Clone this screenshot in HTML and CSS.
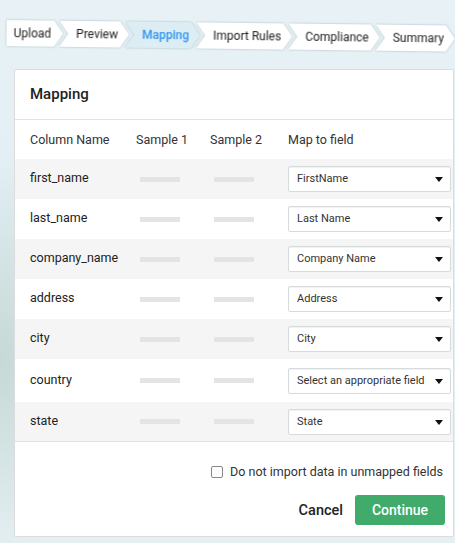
FILE: index.html
```html
<!DOCTYPE html>
<html>
<head>
<meta charset="utf-8">
<link rel="stylesheet" href="styles.css">
</head>
<body>
<nav class="steps">
  <div class="step first">Upload</div>
  <div class="step">Preview</div>
  <div class="step active">Mapping</div>
  <div class="step">Import Rules</div>
  <div class="step">Compliance</div>
  <div class="step">Summary</div>
</nav>
<section class="card">
  <header class="card-head">Mapping</header>
  <div class="grid head-row">
    <div>Column Name</div><div>Sample 1</div><div>Sample 2</div><div>Map to field</div>
  </div>
  <div class="grid row alt"><div>first_name</div><div><span class="bar"></span></div><div><span class="bar"></span></div><div class="sel">FirstName<i class="caret"></i></div></div>
  <div class="grid row"><div>last_name</div><div><span class="bar"></span></div><div><span class="bar"></span></div><div class="sel">Last Name<i class="caret"></i></div></div>
  <div class="grid row alt"><div>company_name</div><div><span class="bar"></span></div><div><span class="bar"></span></div><div class="sel">Company Name<i class="caret"></i></div></div>
  <div class="grid row"><div>address</div><div><span class="bar"></span></div><div><span class="bar"></span></div><div class="sel">Address<i class="caret"></i></div></div>
  <div class="grid row alt"><div>city</div><div><span class="bar"></span></div><div><span class="bar"></span></div><div class="sel">City<i class="caret"></i></div></div>
  <div class="grid row tall"><div>country</div><div><span class="bar"></span></div><div><span class="bar"></span></div><div class="sel">Select an appropriate field<i class="caret"></i></div></div>
  <div class="grid row alt last"><div>state</div><div><span class="bar"></span></div><div><span class="bar"></span></div><div class="sel">State<i class="caret"></i></div></div>
  <footer class="card-foot">
    <label class="check"><span class="box"></span>Do not import data in unmapped fields</label>
    <div class="actions">
      <span class="cancel">Cancel</span>
      <span class="continue">Continue</span>
    </div>
  </footer>
</section>
</body>
</html>
```
FILE: styles.css
```css
html, body { margin: 0; padding: 0; }
body {
  width: 455px;
  height: 543px;
  overflow: hidden;
  font-family: Roboto, "Liberation Sans", sans-serif;
  color: #222;
  background:
    radial-gradient(ellipse 120px 200px at 0px 360px, #c6d9d6 0%, rgba(198,217,214,0) 100%),
    linear-gradient(180deg, #e8f2f6 0%, #e1eef3 40%, #e6f0f3 100%);
}
.steps {
  display: flex;
  padding: 20px 0 0 7px;
  height: 26px;
  filter: drop-shadow(0 0 1px #9fb7bd);
  transform: rotate(0.7deg);
  transform-origin: 0 0;
}
.step {
  background: #fff;
  height: 26px;
  line-height: 26px;
  font-size: 12px;
  color: #222;
  padding: 0 11px 0 17px;
  margin-left: -4px;
  clip-path: polygon(0 0, calc(100% - 9px) 0, 100% 50%, calc(100% - 9px) 100%, 0 100%, 9px 50%);
  white-space: nowrap;
}
.step.first {
  margin-left: 0;
  padding-left: 7px;
  padding-right: 12px;
  clip-path: polygon(0 0, calc(100% - 9px) 0, 100% 50%, calc(100% - 9px) 100%, 0 100%);
}
.step.active {
  background: #dcedf4;
  color: #2f95ee;
  font-weight: 500;
}
.card {
  margin: 23px 1px 0 14px;
  background: #fff;
  border: 1px solid #dcdcdc;
  border-radius: 2px;
}
.card-head {
  height: 49px;
  line-height: 49px;
  padding-left: 15px;
  font-size: 15px;
  font-weight: 500;
  border-bottom: 1px solid #e2e2e2;
}
.grid {
  display: grid;
  grid-template-columns: 106px 74px 78px 1fr;
  align-items: center;
  padding-left: 15px;
  font-size: 12.5px;
}
.head-row { height: 39px; color: #333; }
.row { height: 40px; }
.row > div:first-child { padding-bottom: 3px; }
.row.tall { height: 43px; }
.row.last { height: 39px; }
.alt { background: #f5f5f5; }
.bar {
  display: block;
  width: 40px;
  height: 5px;
  margin-left: 4px;
  background: #e4e4e4;
}
.sel {
  position: relative;
  height: 24px;
  line-height: 24px;
  margin-right: 2px;
  border: 1px solid #d6dcdc;
  border-radius: 2px;
  background: #fff;
  box-shadow: inset 0 1px 1px rgba(0,0,0,0.06);
  padding-left: 8px;
  font-size: 11px;
  color: #333;
}
.caret {
  position: absolute;
  right: 7px;
  top: 10px;
  width: 0;
  height: 0;
  border-left: 4px solid transparent;
  border-right: 4px solid transparent;
  border-top: 5px solid #111;
}
.card-foot {
  border-top: 1px solid #e2e2e2;
  padding: 22px 8px 11px 0;
  display: flex;
  flex-direction: column;
  align-items: flex-end;
}
.check {
  display: flex;
  align-items: center;
  gap: 7px;
  font-size: 12.5px;
  color: #333;
  margin-right: 2px;
}
.box {
  width: 10px;
  height: 10px;
  border: 1px solid #888;
  border-radius: 2px;
}
.actions {
  margin-top: 16px;
  display: flex;
  align-items: center;
  gap: 12px;
}
.cancel { font-size: 14.5px; font-weight: 500; color: #222; }
.continue {
  background: #40ab6a;
  color: #fff;
  font-size: 14px;
  font-weight: 500;
  width: 90px;
  height: 30px;
  line-height: 30px;
  text-align: center;
  border-radius: 3px;
}
```
